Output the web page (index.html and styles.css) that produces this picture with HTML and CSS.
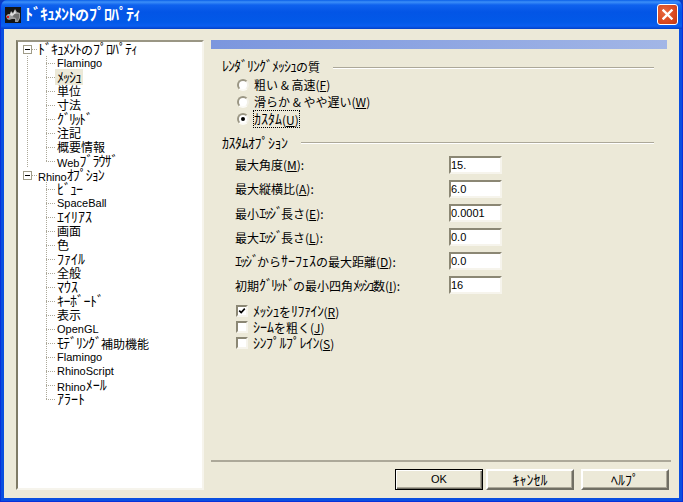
FILE: index.html
```html
<!DOCTYPE html>
<html lang="ja">
<head>
<meta charset="utf-8">
<title>ﾄﾞｷｭﾒﾝﾄのﾌﾟﾛﾊﾟﾃｨ</title>
<link rel="stylesheet" href="styles.css">
</head>
<body>
<div class="window">
  <header class="titlebar">
    <svg class="app-icon" width="16" height="16" viewBox="0 0 16 16"><rect width="16" height="16" fill="#141414"/><path d="M1 9 L3 7 L5 7 L6 4 L8 6 L10 2 L12 5 L15 6 L15 11 L13 15 L10 15 L10 12 L7 12 L4 13 L2 12 Z" fill="#9c9c9c"/><path d="M9 7 L14 7 L14 11 L12 14 L11 11 L8 10 Z" fill="#6e6e6e"/><path d="M6 5 L8 7 L10 3 L11 6 L7 9 L5 8 Z" fill="#e0e0e0"/><rect x="2" y="9" width="2" height="2" fill="#e01818"/></svg>
    <span class="title-text"><span class="k">ﾄﾞｷｭﾒﾝﾄ</span>の<span class="k">ﾌﾟﾛﾊﾟﾃｨ</span></span>
    <button class="close" aria-label="閉じる"><svg width="11" height="11" viewBox="0 0 11 11"><path d="M1.5 1.5 L9.5 9.5 M9.5 1.5 L1.5 9.5" stroke="#fff" stroke-width="2.4" stroke-linecap="square" fill="none"/></svg></button>
  </header>
  <div class="client">
    <nav class="tree">
      <div class="root-row"><span class="expander"></span><span class="stub"></span><span class="node"><span class="k n">ﾄﾞｷｭﾒﾝﾄ</span>の<span class="k n">ﾌﾟﾛﾊﾟﾃｨ</span></span></div>
      <ul class="children continued">
        <li class="child"><span class="elbow"></span><span class="node latin">Flamingo</span></li>
        <li class="child"><span class="elbow"></span><span class="node selected"><span class="k n">ﾒｯｼｭ</span></span></li>
        <li class="child"><span class="elbow"></span><span class="node">単位</span></li>
        <li class="child"><span class="elbow"></span><span class="node">寸法</span></li>
        <li class="child"><span class="elbow"></span><span class="node"><span class="k t">ｸﾞﾘｯﾄﾞ</span></span></li>
        <li class="child"><span class="elbow"></span><span class="node">注記</span></li>
        <li class="child"><span class="elbow"></span><span class="node">概要情報</span></li>
        <li class="child last"><span class="elbow"></span><span class="node"><span class="latin">Web</span><span class="k n">ﾌﾞﾗｳｻﾞ</span></span></li>
      </ul>
      <div class="root-row"><span class="expander"></span><span class="stub"></span><span class="node"><span class="latin">Rhino</span><span class="k n">ｵﾌﾟｼｮﾝ</span></span></div>
      <ul class="children">
        <li class="child"><span class="elbow"></span><span class="node"><span class="k n">ﾋﾞｭｰ</span></span></li>
        <li class="child"><span class="elbow"></span><span class="node latin">SpaceBall</span></li>
        <li class="child"><span class="elbow"></span><span class="node"><span class="k">ｴｲﾘｱｽ</span></span></li>
        <li class="child"><span class="elbow"></span><span class="node">画面</span></li>
        <li class="child"><span class="elbow"></span><span class="node">色</span></li>
        <li class="child"><span class="elbow"></span><span class="node"><span class="k">ﾌｧｲﾙ</span></span></li>
        <li class="child"><span class="elbow"></span><span class="node">全般</span></li>
        <li class="child"><span class="elbow"></span><span class="node"><span class="k">ﾏｳｽ</span></span></li>
        <li class="child"><span class="elbow"></span><span class="node"><span class="k w">ｷｰﾎﾞｰﾄﾞ</span></span></li>
        <li class="child"><span class="elbow"></span><span class="node">表示</span></li>
        <li class="child"><span class="elbow"></span><span class="node latin">OpenGL</span></li>
        <li class="child"><span class="elbow"></span><span class="node"><span class="k n">ﾓﾃﾞﾘﾝｸﾞ</span>補助機能</span></li>
        <li class="child"><span class="elbow"></span><span class="node latin">Flamingo</span></li>
        <li class="child"><span class="elbow"></span><span class="node latin">RhinoScript</span></li>
        <li class="child"><span class="elbow"></span><span class="node"><span class="latin">Rhino</span><span class="k">ﾒｰﾙ</span></span></li>
        <li class="child last"><span class="elbow"></span><span class="node"><span class="k">ｱﾗｰﾄ</span></span></li>
      </ul>
    </nav>
    <main class="pane">
      <div class="banner"></div>
      <div class="group-title quality"><span><span class="k n">ﾚﾝﾀﾞﾘﾝｸﾞﾒｯｼｭ</span>の質</span><i class="rule"></i></div>
      <div class="radios">
        <div class="option"><span class="radio"></span><span>粗い &amp; 高速(<u>F</u>)</span></div>
        <div class="option"><span class="radio"></span><span>滑らか &amp; やや遅い(<u>W</u>)</span></div>
        <div class="option"><span class="radio on"></span><span class="focus"><span class="k">ｶｽﾀﾑ</span>(<u>U</u>)</span></div>
      </div>
      <div class="group-title custom"><span><span class="k w">ｶｽﾀﾑｵﾌﾟｼｮﾝ</span></span><i class="rule"></i></div>
      <div class="fields">
        <label>最大角度(<u>M</u>):</label><span class="input">15.</span>
        <label>最大縦横比(<u>A</u>):</label><span class="input">6.0</span>
        <label>最小<span class="k t">ｴｯｼﾞ</span>長さ(<u>E</u>):</label><span class="input">0.0001</span>
        <label>最大<span class="k t">ｴｯｼﾞ</span>長さ(<u>L</u>):</label><span class="input">0.0</span>
        <label><span class="k t">ｴｯｼﾞ</span>から<span class="k">ｻｰﾌｪｽ</span>の最大距離(<u>D</u>):</label><span class="input">0.0</span>
        <label>初期<span class="k t">ｸﾞﾘｯﾄﾞ</span>の最小四角<span class="k t">ﾒｯｼｭ</span>数(<u>I</u>):</label><span class="input">16</span>
      </div>
      <div class="checks">
        <div class="option"><span class="check"><svg width="10" height="10" viewBox="0 0 10 10"><path d="M1.5 4.5 L4 7 L8.5 2" stroke="#000" stroke-width="2" fill="none"/></svg></span><span><span class="k w">ﾒｯｼｭ</span>を<span class="k w">ﾘﾌｧｲﾝ</span>(<u>R</u>)</span></div>
        <div class="option"><span class="check"></span><span><span class="k">ｼｰﾑ</span>を粗く(<u>J</u>)</span></div>
        <div class="option"><span class="check"></span><span><span class="k w">ｼﾝﾌﾟﾙﾌﾟﾚｲﾝ</span>(<u>S</u>)</span></div>
      </div>
      <footer class="footer">
        <button class="btn default latin">OK</button>
        <button class="btn"><span class="k">ｷｬﾝｾﾙ</span></button>
        <button class="btn"><span class="k">ﾍﾙﾌﾟ</span></button>
      </footer>
    </main>
  </div>
</div>
</body>
</html>
```
FILE: styles.css
```css
* { box-sizing: border-box; }
html, body { margin: 0; padding: 0; background: #0a3fc4; }
body, button {
  font-family: "Noto Sans CJK JP", "Liberation Sans", sans-serif;
  font-size: 12px;
  color: #000;
}
.k { font-size: 14px; vertical-align: 1px; }
.k.w { letter-spacing: -0.5px; }
.k.n { letter-spacing: -1px; }
.k.t { letter-spacing: -2px; }
.latin, .btn.latin { font-family: "Liberation Sans", sans-serif; font-size: 11px; }
.window {
  width: 683px;
  height: 502px;
  display: flex;
  flex-direction: column;
  background: #0a4fe0;
  border-right: 1px solid #0831d9;
  border-bottom: 1px solid #0831d9;
  border-left: 1px solid #0831d9;
  border-radius: 7px 7px 0 0;
  overflow: hidden;
}
.titlebar {
  height: 29px;
  flex: none;
  display: flex;
  align-items: center;
  padding: 0 4px 0 4px;
  background: linear-gradient(#0a5fe8 0, #3c8ff8 2px, #0f62ee 5px, #0355e6 12px, #0259e8 22px, #0a5ef0 26px, #0340c8 29px);
}
.app-icon { flex: none; margin-top: 1px; }
.title-text {
  margin-left: 4px;
  margin-bottom: 2px;
  font-size: 14px;
  font-weight: 700;
  line-height: 16px;
  color: #fff;
  white-space: nowrap;
}
.title-text .k { font-size: 16px; letter-spacing: -1px; vertical-align: 0; }
.close {
  margin-left: auto;
  width: 21px;
  height: 21px;
  padding: 0;
  display: flex;
  align-items: center;
  justify-content: center;
  border: 1px solid #fff;
  border-radius: 3px;
  background: radial-gradient(circle at 35% 35%, #e8683f, #d8481f 60%, #c03810);
}
.client {
  flex: 1;
  min-height: 0;
  margin: 0 3px 3px;
  display: flex;
  gap: 7px;
  padding: 11px 10px 8px 12px;
  background: #ece9d8;
}
.tree {
  width: 188px;
  flex: none;
  background: #fff;
  border-style: solid;
  border-width: 2px;
  border-color: #9a9684 #f6f4ec #f6f4ec #7f7b66;
}
.root-row, .child {
  height: 14px;
  display: flex;
  align-items: center;
  line-height: 14px;
  white-space: nowrap;
}
.root-row { padding-left: 5px; }
.expander {
  width: 9px;
  height: 9px;
  flex: none;
  border: 1px solid #a09c88;
  background: linear-gradient(#000, #000) center / 5px 1px no-repeat, #fff;
}
.stub {
  width: 5px;
  height: 1px;
  flex: none;
  background: repeating-linear-gradient(90deg, #aca899 0 1px, transparent 1px 2px);
}
.node { padding: 0 1px; }
.children {
  list-style: none;
  margin: 0;
  padding: 0 0 0 28px;
}
.continued {
  background: repeating-linear-gradient(#aca899 0 1px, transparent 1px 2px) 9px 0 / 1px 100% no-repeat;
}
.elbow {
  width: 9px;
  height: 14px;
  flex: none;
  background:
    repeating-linear-gradient(90deg, #aca899 0 1px, transparent 1px 2px) 0 7px / 9px 1px no-repeat,
    repeating-linear-gradient(#aca899 0 1px, transparent 1px 2px) 0 0 / 1px 14px no-repeat;
}
.last .elbow {
  background:
    repeating-linear-gradient(90deg, #aca899 0 1px, transparent 1px 2px) 0 7px / 9px 1px no-repeat,
    repeating-linear-gradient(#aca899 0 1px, transparent 1px 2px) 0 0 / 1px 8px no-repeat;
}
.child .node { padding: 0 2px; }
.child .selected { background: #ece9d8; }
.pane {
  flex: 1;
  min-width: 0;
  display: flex;
  flex-direction: column;
}
.banner {
  height: 9px;
  flex: none;
  margin-right: 2px;
  background: linear-gradient(90deg, #7b96de, #a2b6e6);
}
.group-title {
  height: 14px;
  flex: none;
  display: flex;
  align-items: center;
  margin-left: 11px;
  margin-right: 15px;
  line-height: 14px;
  white-space: nowrap;
}
.quality { margin-top: 10px; }
.custom { margin-top: 10px; }
.rule {
  flex: 1;
  height: 2px;
  margin-left: 13px;
  margin-top: 3px;
  border-top: 1px solid #aca899;
  background: #fff;
}
.custom .rule { margin-top: 0; margin-left: 13px; }
.radios { margin: 5px 0 0 26px; display: flex; flex-direction: column; gap: 3px; }
.radios .option { height: 14px; }
.option {
  display: flex;
  align-items: center;
  gap: 5px;
  line-height: 14px;
  white-space: nowrap;
}
.radio {
  width: 12px;
  height: 12px;
  flex: none;
  border-radius: 50%;
  background: #fff;
  border: 2px solid;
  border-color: #9a9684 #f2f0e6 #fbfaf5 #9a9684;
  display: flex;
  align-items: center;
  justify-content: center;
}
.radio.on::after {
  content: "";
  width: 4px;
  height: 4px;
  border-radius: 50%;
  background: #000;
}
.focus { outline: 1px dotted #000; outline-offset: 0; }
.fields {
  display: grid;
  grid-template-columns: 214px 53px;
  grid-auto-rows: 18px;
  row-gap: 6px;
  align-items: center;
  margin: 6px 0 0 24px;
}
.fields label { white-space: nowrap; line-height: 14px; }
.input {
  height: 18px;
  padding: 0;
  font-family: "Liberation Sans", sans-serif;
  font-size: 11px;
  line-height: 14px;
  background: #fff;
  border-style: solid;
  border-width: 2px;
  border-color: #8b8774 #f6f4ec #f6f4ec #8b8774;
}
.checks { margin: 10px 0 0 25px; display: flex; flex-direction: column; gap: 3px; }
.checks .option { height: 13px; }
.check {
  width: 12px;
  height: 12px;
  flex: none;
  display: flex;
  align-items: center;
  justify-content: center;
  background: #fff;
  border-style: solid;
  border-width: 2px;
  border-color: #8b8774 #f6f4ec #f6f4ec #8b8774;
}
.footer {
  margin-top: auto;
  padding-top: 7px;
  border-top: 2px solid;
  display: flex;
  gap: 7px;
  border-image: linear-gradient(#aca899 50%, #fff 50%) 2 / 2px 0 0 0 / 0 2px 0 0;
  padding-right: 0;
  justify-content: flex-end;
}
.btn {
  height: 21px;
  width: 88px;
  padding: 0;
  line-height: 17px;
  background: #ece9d8;
  border-style: solid;
  border-width: 2px;
  border-color: #fff #716f64 #716f64 #fff;
  box-shadow: inset -1px -1px 0 #aca899;
}
.btn.default {
  border: 1px solid #000;
  box-shadow: inset 1px 1px 0 #fff, inset -1px -1px 0 #716f64, inset -2px -2px 0 #aca899;
  margin-right: -4px;
}
```
